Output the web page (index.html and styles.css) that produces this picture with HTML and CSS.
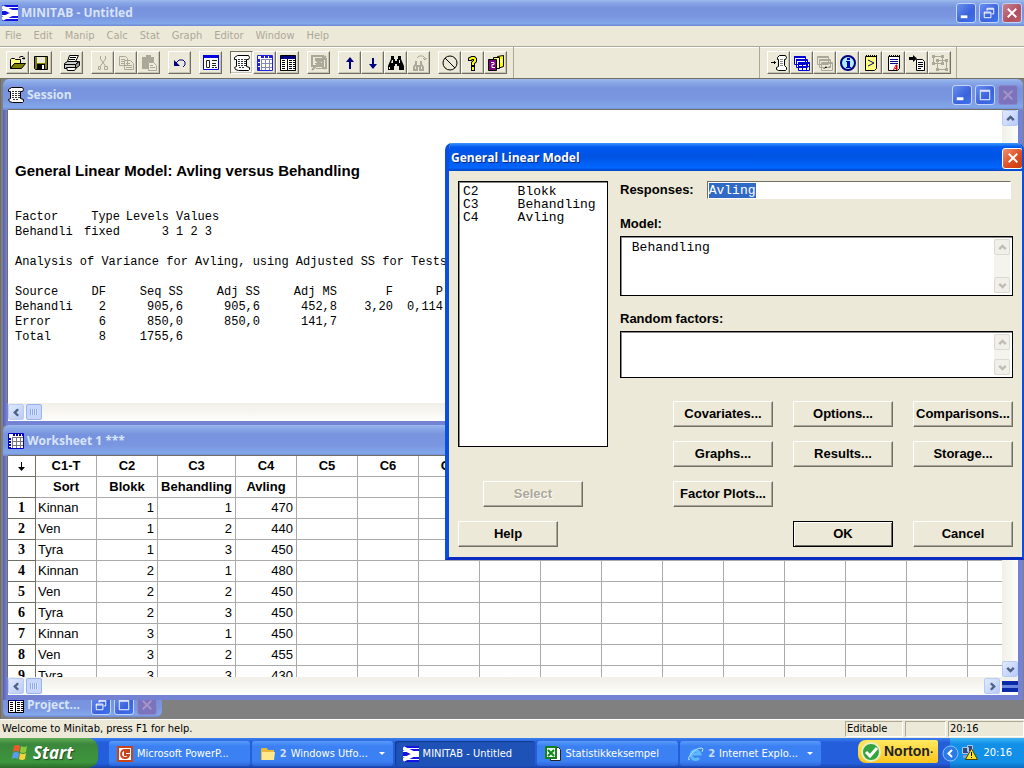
FILE: index.html
```html
<!DOCTYPE html>
<html lang="en">
<head>
<meta charset="utf-8">
<title>MINITAB - Untitled</title>
<link rel="stylesheet" href="styles.css">
<script src="script.js" defer></script>
</head>
<body>
<svg class="defs" aria-hidden="true">
  <symbol id="logo" viewBox="0 0 16 16"><path fill="#1414e0" d="M0 0h16v16H0z"/><path fill="#fff" d="M0 2h16v1H0zM0 5h16v1H0zM0 10h16v1H0zM0 13h16v1H0z"/><path fill="none" stroke="#fff" stroke-width="4" d="M0 2l12 6-12 6"/><path fill="#fff" d="M10 6h6v4h-6z"/></symbol>
  <symbol id="scroll" viewBox="0 0 16 16"><path fill="#fff" stroke="#000" d="M3.500.5h11l1 2-1 2h-2v7l3 1v2l-1 1h-10l-3-1-1-2 2-1v-7h-2v-2z"/><path stroke="#333" stroke-dasharray="2 1" d="M4 4.500h8M4 6.500h8M4 8.500h8M4 10.500h8M5 12.500h6"/></symbol>
  <symbol id="sheet" viewBox="0 0 16 16"><path fill="#fff" stroke="#0000c8" d="M.5.5h15v15H.5z"/><path stroke="#0000a0" stroke-width="2" stroke-dasharray="2 1" d="M5 2h10M2 5v10"/><path stroke="#777" fill="none" d="M4.500 4v11M8.500 4v11M12.500 4v11M4 4.500h11M4 8.500h11M4 12.500h11"/></symbol>
  <symbol id="folder" viewBox="0 0 16 16"><path fill="#000080" stroke="#000" d="M.5.5h15v15H.5z"/><path fill="#fff" d="M1 4h14v11H1z"/><path stroke="#000" d="M7.500 4v11"/><path stroke="#000" stroke-dasharray="3 1" d="M2 5.500h4M2 7.500h4M2 9.500h4M2 11.500h4M2 13.500h4M9 5.500h6M9 7.500h6M9 9.500h6M9 11.500h6M9 13.500h6"/></symbol>
  <symbol id="up" viewBox="0 0 16 16"><path fill="none" stroke="currentColor" stroke-width="3" d="M4 10l4-4 4 4"/></symbol>
  <symbol id="down" viewBox="0 0 16 16"><path fill="none" stroke="currentColor" stroke-width="3" d="M4 6l4 4 4-4"/></symbol>
  <symbol id="left" viewBox="0 0 16 16"><path fill="none" stroke="currentColor" stroke-width="3" d="M10 4L6 8l4 4"/></symbol>
  <symbol id="right" viewBox="0 0 16 16"><path fill="none" stroke="currentColor" stroke-width="3" d="M6 4l4 4-4 4"/></symbol>
  <symbol id="min" viewBox="0 0 19 19"><path fill="#fff" d="M4 12h7v3H4z"/></symbol>
  <symbol id="max" viewBox="0 0 19 19"><path fill="none" stroke="#fff" d="M4.500 5.500h10v9h-10zM4 4.500h11"/></symbol>
  <symbol id="restore" viewBox="0 0 19 19"><path fill="none" stroke="#fff" d="M4.500 8.500h7v6h-7zM4 9.500h7M7.500 7V4.500h7v6H12M7 5.500h7"/></symbol>
  <symbol id="close" viewBox="0 0 19 19"><path stroke="currentColor" stroke-width="2" d="M5 5l9 9M14 5l-9 9"/></symbol>
</svg>

<header class="titlebar app-title">
  <svg class="ico"><use href="#logo"/></svg>
  <h1 class="title-text">MINITAB - Untitled</h1>
  <button class="cap" aria-label="Minimize"><svg><use href="#min"/></svg></button>
  <button class="cap" aria-label="Restore"><svg><use href="#restore"/></svg></button>
  <button class="cap cap-red" aria-label="Close"><svg><use href="#close"/></svg></button>
</header>

<nav class="menu">
  <button>File</button><button>Edit</button><button>Manip</button><button>Calc</button><button>Stat</button><button>Graph</button><button>Editor</button><button>Window</button><button>Help</button>
</nav>

<div class="toolbars">
  <div class="toolbar">
    <div class="group">
      <button class="tool" aria-label="Open"><svg viewBox="0 0 16 16"><path fill="#ffff80" stroke="#000" d="M.5 13.500v-9l1-1h3l1 1h5v4h-6z"/><path fill="#808000" stroke="#000" d="M.5 13.500l4-5h11l-4 5z"/><path fill="none" stroke="#000" d="M9 2.500l2-1h2l1 1v2M12 3.500h3"/></svg></button>
      <button class="tool" aria-label="Save"><svg viewBox="0 0 16 16"><path fill="#808000" stroke="#000" d="M1.500 1.500h13v13h-12l-1-1z"/><path fill="#ece9d8" d="M4 2h8v6H4z"/><path d="M4 9h8v6H4z"/><path fill="#fff" d="M9 10h2v4H9z"/></svg></button>
    </div>
    <div class="group">
      <button class="tool" aria-label="Print"><svg viewBox="0 0 16 16"><path fill="#fff" stroke="#000" d="M5.500.5h9l-3 6h-8z"/><path stroke="#000" d="M6 2.500h6M5 4.500h6"/><path fill="#ccc" stroke="#000" d="M.5 8.500l3-2h11l-3 3H.5zM.5 9.500h11v4H.5z"/><path fill="#999" stroke="#000" d="M11.500 9.500l4-3v4l-4 3z"/><path fill="#fff" stroke="#000" d="M2.500 12.500h10l-2 3h-7z"/></svg></button>
    </div>
    <div class="group">
      <button class="tool" disabled aria-label="Cut"><svg viewBox="0 0 16 16"><path fill="none" stroke="#aca899" d="M5.500 1v3l5 7M10.500 1v3l-5 7M3.500 11.500h2v3h-2zM9.500 11.500h3v3h-3z"/></svg></button>
      <button class="tool" disabled aria-label="Copy"><svg viewBox="0 0 16 16"><path fill="#ece9d8" stroke="#aca899" d="M1.500 1.500h6l2 2v7h-8zM6.500 5.500h6l3 3v6h-9z"/><path stroke="#aca899" d="M3 4.500h4M3 6.500h3M3 8.500h3M8 8.500h4M8 10.500h6M8 12.500h6"/></svg></button>
      <button class="tool" disabled aria-label="Paste"><svg viewBox="0 0 16 16"><path fill="#aca899" d="M1 2h4V0h5v2h3v5H7v7H1z"/><path fill="#ece9d8" stroke="#aca899" d="M7.500 7.500h5l3 3v5h-8z"/><path stroke="#aca899" d="M9 10.500h3M9 12.500h5"/></svg></button>
    </div>
    <div class="group">
      <button class="tool" aria-label="Undo"><svg viewBox="0 0 16 16"><path fill="#000080" d="M2 5v6h6z"/><path fill="none" stroke="#000080" d="M4 8l3-3h4l2 2v3l-2 2"/></svg></button>
    </div>
    <div class="group">
      <button class="tool" aria-label="Last dialog"><svg viewBox="0 0 16 16"><path fill="#fff" stroke="#0000e0" d="M.5.5h15v14H.5z"/><path fill="#0000e0" d="M0 0h16v3H0z"/><path fill="none" stroke="#222" d="M3.500 5.500h3v7h-3zM9 5.500h5M9 8.500h4M9 10.500h4M9 12.500h2M12 12.500h2"/></svg></button>
    </div>
    <div class="group">
      <button class="tool pressed" aria-label="Session window"><svg><use href="#scroll"/></svg></button>
      <button class="tool" aria-label="Worksheet window"><svg viewBox="0 0 16 16"><path fill="#fff" stroke="#2020e0" d="M.5.5h15v15H.5z"/><path stroke="#2020e0" stroke-width="2" stroke-dasharray="3 1" d="M4 2h11M2 4v11"/><path stroke="#8888b8" d="M4.500 4v11M8.500 4v11M12.500 4v11M4 4.500h11M4 8.500h11M4 12.500h11"/></svg></button>
      <button class="tool" aria-label="Project manager"><svg><use href="#folder"/></svg></button>
    </div>
    <div class="group">
      <button class="tool" disabled aria-label="Close graphs"><svg viewBox="0 0 16 16"><path fill="none" stroke="#aca899" stroke-width="2" d="M1 1h11v10H1zM4 4h11v10"/><path stroke="#aca899" stroke-width="2" d="M15 1L1 15M5 5l9 9"/><path stroke="#aca899" d="M4 5.500h7M4 8.500h9M5 13.500h10"/></svg></button>
    </div>
    <div class="group">
      <button class="tool" aria-label="Previous"><svg viewBox="0 0 16 16"><path fill="#000080" d="M8 2l4 5H9v7H7V7H4z"/></svg></button>
      <button class="tool" aria-label="Next"><svg viewBox="0 0 16 16"><path fill="#000080" d="M8 14l4-5H9V3H7v6H4z"/></svg></button>
      <button class="tool" aria-label="Find"><svg viewBox="0 0 16 16"><path d="M3 1h3v3h1v2h2V4h1V1h3v3l3 7v4h-5v-4H9V9H7v2H6v4H0v-4l3-7z"/><path fill="#ece9d8" d="M4 5h1v3H3zM11 5h1v3h-1zM1 12h1v2H1z"/></svg></button>
      <button class="tool" disabled aria-label="Replace"><svg viewBox="0 0 16 16"><path fill="none" stroke="#aca899" d="M6 3l2-2h4l2 2v2M12 3l2 2 2-2"/><path fill="none" stroke="#aca899" stroke-width="2" d="M5 6v3l-2 3v3h3v-4h3v4h3v-3l-2-3V6"/></svg></button>
    </div>
    <div class="group">
      <button class="tool" aria-label="Cancel"><svg viewBox="0 0 16 16"><circle cx="8" cy="8" r="7" fill="none" stroke="#000"/><path stroke="#000" d="M3 3l10 10"/></svg></button>
      <button class="tool" aria-label="Help"><svg viewBox="0 0 16 16"><path fill="none" stroke="#000" stroke-width="4" d="M5 6V4l2-1h2l1 1v2L8 8v3"/><path d="M6 11h4v5H6z"/><path fill="none" stroke="#ff0" stroke-width="2" d="M5 5V4l2-1h2l1 1v2L8 8v2M8 12v3"/></svg></button>
      <button class="tool" aria-label="StatGuide"><svg viewBox="0 0 16 16"><path fill="#ff0" stroke="#000" d="M9.500 1.500l6-1v11l-6 2z"/><path fill="#ffff80" stroke="#000" d="M5.500 2.500h6v11h-6z"/><path fill="#800080" stroke="#000" d="M.5 4.500h8v11h-8z"/><path fill="none" stroke="#fff" d="M3 7.500h3v2H4v3h3M13 4v4"/></svg></button>
    </div>
  </div>
  <div class="toolbar toolbar-right">
    <div class="group">
      <button class="tool" aria-label="Append to report"><svg viewBox="0 0 16 16"><path fill="#fff" stroke="#000" d="M8.500.5h6l1 2-1 2h-1v6l2 2v2l-1 1h-7l-2-1v-2l2-1v-7h-1v-2z"/><path stroke="#000" d="M0 7.500h5M3.500 6v3"/><path stroke="#888" d="M9 4.500h3M9 6.500h3M9 8.500h3M9 10.500h3"/></svg></button>
      <button class="tool" aria-label="Show worksheets"><svg viewBox="0 0 16 16"><path fill="#fff" stroke="#0000d0" d="M.5 1.500h11v8H.5zM2.500 4.500h11v8h-11zM4.500 7.500h11v8h-11z"/><path stroke="#0000d0" stroke-width="2" d="M0 2h11M2 5h11M4 8h12"/><path stroke="#0000d0" d="M8.500 8v8M12.500 8v8M5 11.500h10"/></svg></button>
      <button class="tool" disabled aria-label="Show graphs"><svg viewBox="0 0 16 16"><path fill="#ece9d8" stroke="#aca899" d="M.5 1.500h11v8H.5zM2.500 4.500h11v8h-11zM4.500 7.500h11v8h-11z"/><path stroke="#aca899" d="M0 2.500h11M2 5.500h11M4 8.500h12M6 14l3-3 2 2 3-2"/></svg></button>
      <button class="tool" aria-label="Information"><svg viewBox="0 0 16 16"><circle cx="8" cy="8" r="7" fill="#aef" stroke="#000080" stroke-width="2"/><path fill="#0000c0" d="M7 3h3v2H7zM6 6h4v6h1v1H6v-1h1V7H6z"/></svg></button>
      <button class="tool" aria-label="History"><svg viewBox="0 0 16 16"><path fill="#ffff80" stroke="#000" d="M2.500 1.500h11v12l-2 2h-9z"/><path stroke="#000" stroke-width="2" stroke-dasharray="1 1" d="M3 1h11"/><path fill="none" stroke="#000080" d="M5 5l6 3-6 3"/></svg></button>
      <button class="tool" aria-label="Report pad"><svg viewBox="0 0 16 16"><path fill="#fff" stroke="#000" d="M2.500 1.500h11v12l-2 2h-9z"/><path stroke="#000" stroke-width="2" stroke-dasharray="1 1" d="M3 1h11"/><path stroke="#000080" d="M4 4.500h8M4 6.500h8M4 8.500h8"/><path fill="none" stroke="#e00000" d="M7.500 15l2.500-5h1v5M9 13.500h2M10.500 10v5"/></svg></button>
      <button class="tool" aria-label="Related documents"><svg viewBox="0 0 16 16"><path d="M0 2h4V0l4 3.500L4 7V5H0z"/><path fill="#fff" stroke="#000" d="M7.500 4.500h6l2 2v9h-8z"/><path stroke="#000" d="M9 7.500h5M9 9.500h5M9 11.500h5M9 13.500h3"/></svg></button>
      <button class="tool" disabled aria-label="Design"><svg viewBox="0 0 16 16"><path fill="none" stroke="#aca899" d="M1.500 1.500h9v7h-9zM5.500 5.500h9v9h-9z"/><path fill="#aca899" d="M0 0h3v3H0zM9 0h3v3H9zM0 7h3v3H0zM9 7h3v3H9zM4 4h3v3H4zM13 4h3v3h-3zM13 13h3v3h-3zM4 13h3v3H4z"/></svg></button>
    </div>
  </div>
</div>

<main class="workspace">
  <section class="win win-project">
    <div class="titlebar">
      <svg class="ico"><use href="#folder"/></svg>
      <h2 class="title-text">Project...</h2>
      <button class="cap" aria-label="Restore"><svg><use href="#restore"/></svg></button>
      <button class="cap" aria-label="Maximize"><svg><use href="#max"/></svg></button>
      <button class="cap cap-off" disabled aria-label="Close"><svg><use href="#close"/></svg></button>
    </div>
  </section>

  <section class="win win-session">
    <div class="titlebar">
      <svg class="ico"><use href="#scroll"/></svg>
      <h2 class="title-text">Session</h2>
      <button class="cap" aria-label="Minimize"><svg><use href="#min"/></svg></button>
      <button class="cap" aria-label="Maximize"><svg><use href="#max"/></svg></button>
      <button class="cap cap-off" disabled aria-label="Close"><svg><use href="#close"/></svg></button>
    </div>
    <div class="view">
      <div class="output">
        <h3>General Linear Model: Avling versus Behandling</h3>
        <table class="out">
          <tr><th class="c-type">Factor</th><th class="c-df">Type</th><th class="c-levels">Levels</th><th class="c-values">Values</th></tr>
          <tr><td class="c-type">Behandli</td><td class="c-df">fixed</td><td class="c-levels">3</td><td class="c-values">1 2 3</td></tr>
        </table>
        <p>Analysis of Variance for Avling, using Adjusted SS for Tests</p>
        <table class="out">
          <tr><th class="c-source">Source</th><th class="c-n">DF</th><th class="c-ss">Seq SS</th><th class="c-ss">Adj SS</th><th class="c-ss">Adj MS</th><th class="c-f">F</th><th class="c-p">P</th></tr>
          <tr><td>Behandli</td><td>2</td><td>905,6</td><td>905,6</td><td>452,8</td><td>3,20</td><td>0,114</td></tr>
          <tr><td>Error</td><td>6</td><td>850,0</td><td>850,0</td><td>141,7</td><td></td><td></td></tr>
          <tr><td>Total</td><td>8</td><td>1755,6</td><td></td><td></td><td></td><td></td></tr>
        </table>
      </div>
      <div class="vscroll"><button class="sb" aria-label="Scroll up"><svg><use href="#up"/></svg></button><button class="sb" aria-label="Scroll down"><svg><use href="#down"/></svg></button></div>
    </div>
    <div class="hscroll"><button class="sb" aria-label="Scroll left"><svg><use href="#left"/></svg></button><div class="thumb"></div></div>
  </section>

  <section class="win win-sheet">
    <div class="titlebar">
      <svg class="ico"><use href="#sheet"/></svg>
      <h2 class="title-text">Worksheet 1 ***</h2>
    </div>
    <div class="view">
      <div class="sheet-view">
        <table class="sheet">
          <thead>
            <tr><th class="rowno"><svg class="arrow" viewBox="0 0 9 9"><path d="M4 0h1v5h3L4.500 9 1 5h3z"/></svg></th><th>C1-T</th><th>C2</th><th class="wide">C3</th><th>C4</th><th>C5</th><th>C6</th><th>C7</th><th></th><th></th><th></th><th></th><th></th><th></th><th></th><th></th><th></th></tr>
            <tr><th></th><th>Sort</th><th>Blokk</th><th>Behandling</th><th>Avling</th><th></th><th></th><th></th><th></th><th></th><th></th><th></th><th></th><th></th><th></th><th></th><th></th></tr>
          </thead>
          <tbody>
            <tr><th>1</th><td>Kinnan</td><td>1</td><td>1</td><td>470</td><td></td><td></td><td></td><td></td><td></td><td></td><td></td><td></td><td></td><td></td><td></td><td></td></tr>
            <tr><th>2</th><td>Ven</td><td>1</td><td>2</td><td>440</td><td></td><td></td><td></td><td></td><td></td><td></td><td></td><td></td><td></td><td></td><td></td><td></td></tr>
            <tr><th>3</th><td>Tyra</td><td>1</td><td>3</td><td>450</td><td></td><td></td><td></td><td></td><td></td><td></td><td></td><td></td><td></td><td></td><td></td><td></td></tr>
            <tr><th>4</th><td>Kinnan</td><td>2</td><td>1</td><td>480</td><td></td><td></td><td></td><td></td><td></td><td></td><td></td><td></td><td></td><td></td><td></td><td></td></tr>
            <tr><th>5</th><td>Ven</td><td>2</td><td>2</td><td>450</td><td></td><td></td><td></td><td></td><td></td><td></td><td></td><td></td><td></td><td></td><td></td><td></td></tr>
            <tr><th>6</th><td>Tyra</td><td>2</td><td>3</td><td>450</td><td></td><td></td><td></td><td></td><td></td><td></td><td></td><td></td><td></td><td></td><td></td><td></td></tr>
            <tr><th>7</th><td>Kinnan</td><td>3</td><td>1</td><td>450</td><td></td><td></td><td></td><td></td><td></td><td></td><td></td><td></td><td></td><td></td><td></td><td></td></tr>
            <tr><th>8</th><td>Ven</td><td>3</td><td>2</td><td>455</td><td></td><td></td><td></td><td></td><td></td><td></td><td></td><td></td><td></td><td></td><td></td><td></td></tr>
            <tr><th>9</th><td>Tyra</td><td>3</td><td>3</td><td>430</td><td></td><td></td><td></td><td></td><td></td><td></td><td></td><td></td><td></td><td></td><td></td><td></td></tr>
          </tbody>
        </table>
      </div>
      <div class="vscroll"><button class="sb" aria-label="Scroll up"><svg><use href="#up"/></svg></button><button class="sb" aria-label="Scroll down"><svg><use href="#down"/></svg></button></div>
    </div>
    <div class="hscroll"><button class="sb" aria-label="Scroll left"><svg><use href="#left"/></svg></button><div class="thumb"></div><button class="sb push" aria-label="Scroll right"><svg><use href="#right"/></svg></button><div class="grip"></div></div>
  </section>
</main>

<footer class="status">
  <span class="grow">Welcome to Minitab, press F1 for help.</span>
  <span class="pane">Editable</span><span class="pane pane-small"></span><span class="pane pane-time">20:16</span>
</footer>

<div class="taskbar">
  <button class="start"><svg viewBox="0 0 20 20"><path fill="#f0592b" d="M4 3q3-2 6 0L9 9Q6 7 3 9z"/><path fill="#8ccb3c" d="M11 3q3 2 6 0l-1 6q-3 2-6 0z"/><path fill="#5a9bf5" d="M3 10q3-2 6 0l-1 6q-3-2-6 0z"/><path fill="#fbd13a" d="M10 10q3 2 6 0l-1 6q-3 2-6 0z"/></svg>Start</button>
  <div class="tasks">
    <button class="task"><svg viewBox="0 0 16 16"><path fill="#fff" stroke="#c8451b" stroke-width="2" d="M1 1h14v14H1z"/><path fill="none" stroke="#c8451b" stroke-width="2" d="M8 4a4 4 0 1 0 4 5H8z"/><path fill="#c8451b" d="M9 3h4v4H9z"/></svg><span class="grow">Microsoft PowerP...</span></button>
    <button class="task"><svg viewBox="0 0 16 16"><path fill="#e8b93a" d="M1 3l1-1h5l1 2h6v10H1z"/><path fill="#ffe88c" d="M2 6h13l-1 8H2z"/></svg><b>2</b><span class="grow">Windows Utfo...</span><i class="caret"></i></button>
    <button class="task active"><svg><use href="#logo"/></svg><span class="grow">MINITAB - Untitled</span></button>
    <button class="task"><svg viewBox="0 0 16 16"><path fill="#fff" stroke="#222" d="M5.500 1.500h8l2 2v11h-10z"/><path fill="#e8f5e8" stroke="#15821f" stroke-width="2" d="M1 1h10v11H1z"/><path stroke="#15821f" stroke-width="2" d="M3 4l6 6M9 4l-6 6"/></svg><span class="grow">Statistikkeksempel</span></button>
    <button class="task"><svg viewBox="0 0 16 16"><path fill="none" stroke="#5cb8ff" stroke-width="3" d="M3 8h9a4.500 4.500 0 1 0-1 4"/><path fill="none" stroke="#b8e2ff" d="M2 13Q-1 15 1 11 6 2 14 2q2 0 0 4"/></svg><b>2</b><span class="grow">Internet Explo...</span><i class="caret"></i></button>
  </div>
  <button class="norton"><svg viewBox="0 0 20 20"><circle cx="10" cy="10" r="9" fill="#35a33b" stroke="#e5f0c8" stroke-width="2"/><path fill="none" stroke="#fff" stroke-width="3" d="M5 10l4 4 7-8"/></svg><span>Norton<small>·</small></span></button>
  <div class="tray">
    <button class="chev" aria-label="Show hidden icons"><svg viewBox="0 0 17 17"><circle cx="8.500" cy="8.500" r="7.500" fill="#2a7be8" stroke="#8cc4ff"/><path fill="none" stroke="#fff" stroke-width="2" d="M10 5L6.500 8.500 10 12"/></svg></button>
    <svg class="net" viewBox="0 0 16 16"><path fill="#34487c" stroke="#a8c8f0" d="M.5 2.500h6v6h-6zM5.500.5h5v6h-5z"/><path fill="#8aa0c8" d="M1 10h6v3H1z"/><path fill="#fce22a" stroke="#4a4000" d="M9.500 3.500l6 11h-12z"/><path d="M9 7h1v4H9zM9 12h1v1H9z"/></svg>
    <time>20:16</time>
  </div>
</div>

<div class="dialog" role="dialog" aria-labelledby="dlg-title">
  <div class="dlg-bar"><h2 class="title-text" id="dlg-title">General Linear Model</h2><button class="cap cap-x" aria-label="Close"><svg><use href="#close"/></svg></button></div>
  <form class="dlg-body">
    <div class="dlg-left">
      <select class="vars" size="4" aria-label="Variables">
        <option>C2&nbsp;&nbsp;&nbsp;&nbsp;&nbsp;Blokk</option>
        <option>C3&nbsp;&nbsp;&nbsp;&nbsp;&nbsp;Behandling</option>
        <option>C4&nbsp;&nbsp;&nbsp;&nbsp;&nbsp;Avling</option>
      </select>
      <button type="button" class="btn center" disabled>Select</button>
      <button type="button" class="btn">Help</button>
    </div>
    <div class="dlg-right">
      <div class="row"><label for="resp">Responses:</label><input id="resp" class="resp" type="text" value="Avling"></div>
      <div class="field">
        <label for="model">Model:</label>
        <div class="box box-tall"><textarea id="model"> Behandling</textarea><div class="vscroll off"><button type="button" class="sb" disabled aria-label="Up"><svg><use href="#up"/></svg></button><button type="button" class="sb" disabled aria-label="Down"><svg><use href="#down"/></svg></button></div></div>
      </div>
      <div class="field">
        <label for="random">Random factors:</label>
        <div class="box"><textarea id="random"></textarea><div class="vscroll off"><button type="button" class="sb" disabled aria-label="Up"><svg><use href="#up"/></svg></button><button type="button" class="sb" disabled aria-label="Down"><svg><use href="#down"/></svg></button></div></div>
      </div>
      <div class="buttons">
        <button type="button" class="btn">Covariates...</button><button type="button" class="btn">Options...</button><button type="button" class="btn">Comparisons...</button>
        <button type="button" class="btn">Graphs...</button><button type="button" class="btn">Results...</button><button type="button" class="btn">Storage...</button>
        <button type="button" class="btn">Factor Plots...</button>
        <button type="button" class="btn ok">OK</button><button type="button" class="btn cancel">Cancel</button>
      </div>
    </div>
  </form>
</div>
</body>
</html>
```
FILE: styles.css
```css
* { box-sizing: border-box; }
body {
  margin: 0;
  height: 100vh;
  display: flex;
  flex-direction: column;
  overflow: hidden;
  position: relative;
  background: #ece9d8;
  font: 11px/14px "DejaVu Sans Condensed", "Noto Sans", sans-serif;
  color: #000;
}
button, input, select, textarea { font: inherit; color: inherit; margin: 0; padding: 0; border: 0; background: none; border-radius: 0; outline: 0; }
h1, h2, h3, p { margin: 0; }
svg { display: block; flex: none; fill: #000; }
.defs { position: absolute; width: 0; height: 0; }
.grow { flex: 1; min-width: 0; text-align: left; white-space: nowrap; overflow: hidden; }

/* Title bars */
.titlebar {
  display: flex;
  align-items: center;
  gap: 3px;
  height: 26px;
  flex: none;
  padding: 0 2px;
  background: linear-gradient(#9db9eb 0, #8aa9e8 10%, #7893dd 30%, #7a96e0 65%, #82a7ea 90%, #7187d4);
}
.title-text {
  flex: 1;
  min-width: 0;
  font: bold 12px/16px "Open Sans", "Noto Sans", sans-serif;
  color: #d8e4f8;
  white-space: nowrap;
}
.ico { width: 16px; height: 16px; }
.cap {
  width: 20px;
  height: 20px;
  flex: none;
  display: grid;
  place-items: center;
  color: #fff;
  border: 1px solid #c4d4f6;
  border-radius: 3px;
  background: linear-gradient(135deg, #6a8ff0, #3a62dc 60%, #3f74f0);
}
.cap svg { width: 18px; height: 18px; }
.cap-red { background: linear-gradient(135deg, #c8808c, #b05060 60%, #b86068); }
.cap-off { color: #a893c8; border-color: #8a88cc; background: #7b74bc; }
.cap-x { width: 21px; height: 21px; border-color: #fff; background: linear-gradient(135deg, #f09070, #dc4a20 60%, #c83c10); }

/* Menu and tool bars */
.menu { display: flex; gap: 12px; height: 20px; flex: none; padding: 0 5px; align-items: center; }
.menu button { color: #aca899; }
.toolbars {
  display: flex;
  justify-content: space-between;
  height: 32px;
  flex: none;
  border-top: 1px solid #aca899;
  box-shadow: inset 0 1px #fff;
}
.toolbar { display: flex; gap: 8px; align-items: center; padding: 0 6px; border-right: 1px solid #aca899; }
.toolbar-right { padding: 0 5px 0 7px; margin-right: 67px; border-left: 1px solid #aca899; }
.group { display: flex; }
.tool {
  width: 23px;
  height: 23px;
  display: grid;
  place-items: center;
  border: 1px solid;
  border-color: #fff #716f64 #716f64 #fff;
  box-shadow: inset -1px -1px #c8c4b4;
}
.tool svg { width: 16px; height: 16px; }
.tool.pressed { border-color: #716f64 #fff #fff #716f64; background: #f6f4ec; }

/* MDI workspace */
.workspace { flex: 1; min-height: 0; position: relative; overflow: hidden; background: #808080; border-top: 1px solid #716f64; border-left: 1px solid #716f64; }
.win { position: absolute; display: flex; flex-direction: column; padding: 0 5px 5px; background: linear-gradient(90deg, #5560b8 0, #7482d4 4px, #7482d4); border-radius: 6px 6px 0 0; overflow: hidden; }
.win .titlebar { height: 31px; margin: 0 -5px; padding: 0 5px; }
.win-session { left: 2px; right: 1px; top: 0; height: 347px; }
.win-sheet { left: 2px; right: 1px; top: 346px; height: 275px; }
.win-project { left: 2px; bottom: 2px; width: 159px; padding: 0; border-radius: 6px; }
.win-project .titlebar { height: 25px; margin: 0; }
.view { flex: 1; min-height: 0; display: flex; background: #fff; box-shadow: 0 -1px #716f64, -1px 0 #716f64; }

.output { flex: 1; min-width: 0; overflow: hidden; padding: 52px 7px 0; font: 12px/15px "Liberation Mono", monospace; }
.output h3 { font: bold 15px/18px "Liberation Sans", sans-serif; margin-bottom: 30px; }
.output p { margin: 15px 0; white-space: nowrap; }
.out { border-collapse: collapse; }
.out th, .out td { padding: 0; font-weight: normal; text-align: right; height: 15px; white-space: nowrap; }
.out th:first-child, .out td:first-child { text-align: left; }
.c-type { width: 64px; }
.c-df { width: 41px; }
.c-levels { width: 49px; }
.out .c-values { text-align: left; padding-left: 7px; }
.c-source { width: 70px; }
.c-n { width: 21px; }
.c-ss { width: 77px; }
.c-f { width: 56px; }
.c-p { width: 50px; }

/* Scroll bars */
.vscroll { width: 16px; flex: none; display: flex; flex-direction: column; justify-content: space-between; background: linear-gradient(90deg, #f0efe8, #fefefb); }
.hscroll { height: 18px; flex: none; display: flex; align-items: center; gap: 2px; background: linear-gradient(#f0efe8, #fefefb); }
.sb { width: 16px; height: 16px; flex: none; display: grid; place-items: center; color: #4d6185; border: 1px solid #b8cbf6; border-radius: 2px; background: linear-gradient(135deg, #e1eafe, #b8cbf8); }
.sb svg { width: 13px; height: 13px; }
.thumb { width: 16px; height: 16px; border: 1px solid #98b4ec; border-radius: 2px; background: repeating-linear-gradient(90deg, #8ca8e8 0 1px, #dbe6fe 1px 2px) 3px 4px / 8px 6px no-repeat, #c8d6fb; }
.push { margin-left: auto; }
.grip { width: 16px; height: 11px; border: solid #0a2aa8; border-width: 4px 0; background: #6a8ae0; }
.off { background: #f4f3ee; }
.off .sb { color: #c0beb4; border-color: #dcdad0; background: #f0efe9; }

/* Worksheet grid */
.sheet-view { flex: 1; min-width: 0; overflow: hidden; }
.sheet { border-collapse: separate; border-spacing: 0; font: 13px/20px "Liberation Sans", sans-serif; table-layout: fixed; width: 1021px; }
.sheet th, .sheet td { height: 21px; padding: 0 3px; border: solid #aaa; border-width: 0 1px 1px 0; white-space: nowrap; }
.sheet td { text-align: right; }
.sheet td:nth-child(2) { text-align: left; padding-left: 2px; }
.sheet thead th { width: 61px; padding: 0 1px; }
.sheet thead .wide { width: 78px; }
.sheet thead .rowno { width: 28px; }
.sheet th:first-child { border-color: #716f64; }
.sheet tbody th { font-family: "Liberation Serif", serif; font-size: 14px; }
.arrow { width: 9px; height: 9px; margin: 0 auto; }

/* Status bar */
.status { display: flex; gap: 2px; height: 19px; flex: none; align-items: center; padding-left: 2px; border-top: 1px solid #fff; }
.pane { width: 58px; height: 16px; padding-left: 1px; border: 1px solid; border-color: #aca899 #fff #fff #aca899; }
.pane-small { width: 41px; }
.pane-time { width: 76px; }

/* Task bar */
.taskbar { display: flex; align-items: stretch; height: 30px; flex: none; color: #fff; background: linear-gradient(#3a80f0 0, #245edb 15%, #245edb 85%, #1941a5); }
.start {
  width: 98px;
  display: flex;
  align-items: center;
  gap: 3px;
  padding-left: 10px;
  border-radius: 0 10px 10px 0;
  background: linear-gradient(#5eac56 0, #3c873c 20%, #3c963c 80%, #2a6a2a);
  font: italic bold 17px/22px "Open Sans", "Noto Sans", sans-serif;
  text-shadow: 1px 1px 1px #1f4a1f;
}
.start svg { width: 20px; height: 20px; }
.tasks { flex: 1; display: flex; gap: 2px; padding: 3px 37px 2px 11px; min-width: 0; }
.task { flex: 1; min-width: 0; display: flex; align-items: center; gap: 4px; padding: 0 8px; border-radius: 3px; color: #fff; background: linear-gradient(#5a9bff, #3c81f3 20%, #3c81f3 80%, #2c66d8); }
.task svg { width: 16px; height: 16px; }
.task b { color: #cfdcf4; }
.task.active { background: #1e52b7; box-shadow: inset 1px 1px 1px #123a88; }
.caret { border: 3px solid transparent; border-top-color: #fff; border-bottom: 0; }
.norton { width: 80px; margin: 2px 12px 5px 0; display: flex; align-items: center; gap: 3px; padding-left: 3px; color: #222; border-radius: 8px 2px 2px 8px; background: linear-gradient(#ffe860, #fcc61e); font: bold 14px/18px "Liberation Sans", sans-serif; }
.norton svg { width: 20px; height: 20px; }
.tray { width: 74px; display: flex; align-items: center; gap: 3px; padding-right: 12px; background: linear-gradient(#3cb4f4, #1290e8 20%, #1290e8 80%, #0c6cc0); }
.chev { margin-left: -8px; }
.chev svg { width: 17px; height: 17px; }
.net { width: 16px; height: 16px; }
.tray time { margin-left: auto; }

/* Dialog */
.dialog { position: absolute; right: 0; top: 143px; width: 579px; background: #ece9d8; border: solid #0a50e0; border-width: 0 2px 3px 4px; border-bottom-color: #0a2cc0; border-radius: 7px 7px 0 0; overflow: hidden; font: bold 13px/16px "Liberation Sans", sans-serif; }
.dlg-bar { height: 28px; margin: 0 -2px 0 -4px; padding: 2px 1px 0 6px; display: flex; align-items: center; background: linear-gradient(#3c96ff 0, #0058ee 15%, #0054e3 50%, #0066ff 88%, #0044c0); }
.dlg-bar .title-text { color: #fff; text-shadow: 1px 1px #0a2a80; }
.dlg-body { display: flex; gap: 12px; padding: 10px 9px 10px; }
.dlg-left { width: 150px; flex: none; display: flex; flex-direction: column; gap: 14px; }
.vars { width: 100%; flex: 1; margin-bottom: 20px; padding: 2px; overflow: hidden; border: 1px solid #000; box-shadow: inset 1px 1px #888; background: #fff; font: 13px/13px "Liberation Mono", monospace; }
.vars option { display: block; padding: 0 2px; min-height: 0; height: 13px; line-height: 13px; }
.center { align-self: center; }
.dlg-right { flex: 1; min-width: 0; display: flex; flex-direction: column; gap: 15px; }
.row { display: flex; align-items: center; gap: 13px; margin-bottom: 2px; }
.resp { flex: 1; min-width: 0; height: 18px; margin-right: 2px; padding: 0 1px; border: 1px solid; border-color: #716f64 #fff #fff #716f64; background: #fff; font: 13px/16px "Liberation Mono", monospace; }
.resp::selection { background: #316ac5; color: #fff; }
.field { display: flex; flex-direction: column; gap: 4px; }
.box { display: flex; height: 47px; border: 1px solid #000; box-shadow: inset 1px 1px #888; background: #fff; padding: 2px; }
.box-tall { height: 60px; }
.box textarea { flex: 1; min-width: 0; resize: none; overflow: hidden; padding: 1px 1px 0; font: 13px/15px "Liberation Mono", monospace; }
.buttons { display: grid; grid-template-columns: repeat(3, 100px); gap: 14px 20px; justify-content: end; margin-top: 8px; }
.btn { width: 100px; height: 26px; border: 1px solid; border-color: #fff #716f64 #716f64 #fff; box-shadow: inset -1px -1px #aca899; white-space: nowrap; display: flex; justify-content: center; align-items: center; }
.btn:disabled { color: #aca899; text-shadow: 1px 1px #fff; }
.ok { grid-area: 4 / 2; border-color: #000; box-shadow: inset 1px 1px #fff, inset -1px -1px #716f64; }
.cancel { grid-area: 4 / 3; }
```
FILE: script.js
```js
const responses = document.getElementById("resp");
responses.focus();
responses.select();
```
